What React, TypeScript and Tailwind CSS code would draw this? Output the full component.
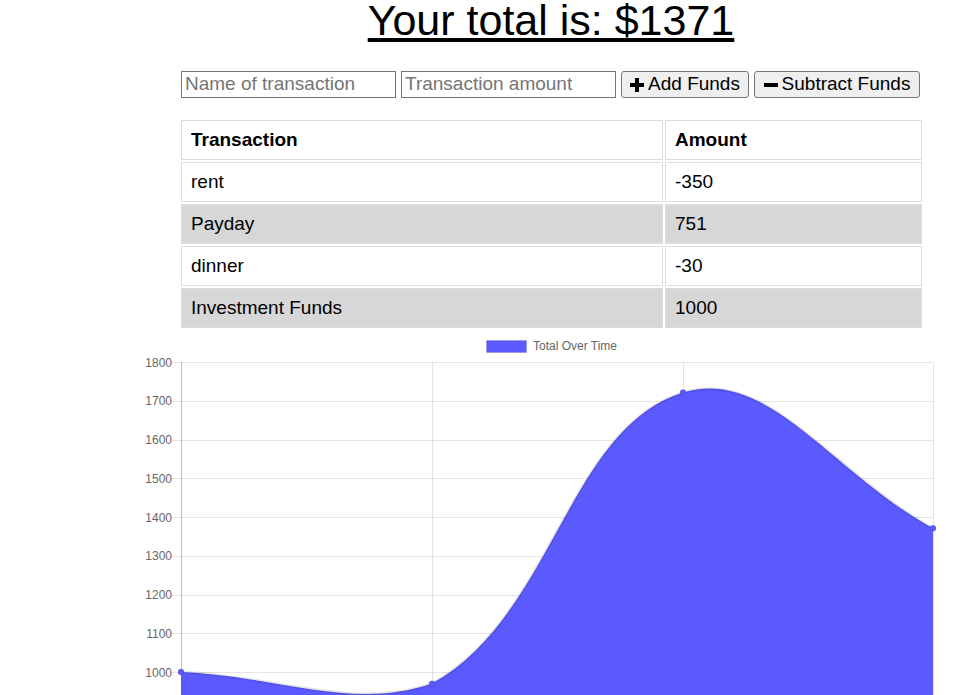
import React from 'react';

type Tx = { name: string; amount: number };

const transactions: Tx[] = [
  { name: 'rent', amount: -350 },
  { name: 'Payday', amount: 751 },
  { name: 'dinner', amount: -30 },
  { name: 'Investment Funds', amount: 1000 },
];

const PlusIcon = () => (
  <svg width="14" height="14" viewBox="0 0 14 14" className="shrink-0">
    <rect x="5" y="0" width="4" height="14" fill="#000" />
    <rect x="0" y="5" width="14" height="4" fill="#000" />
  </svg>
);

const MinusIcon = () => (
  <svg width="14" height="14" viewBox="0 0 14 14" className="shrink-0">
    <rect x="0" y="5" width="14" height="4" fill="#000" />
  </svg>
);

// chart geometry, in page coordinates
const yOf = (v: number) => 362 + (1800 - v) * 0.3875;
const ticks = [1800, 1700, 1600, 1500, 1400, 1300, 1200, 1100, 1000, 900];
const xs = [181, 432, 683, 933];
const totals = [1000, 970, 1721, 1371];

const curve =
  'M181,672 C281.4,676.6 352.6,711 432,683.6 C553.4,616 567.8,428.3 683,392.6 C768.2,366.2 833,474 933,528.2';

const Chart = () => (
  <svg width="820" height="420" viewBox="120 335 820 420" className="block ml-[120px]">
    <rect x="486.5" y="340.5" width="40" height="12" fill="#5a5aff" stroke="rgba(0,0,0,0.1)" />
    <text x="533" y="350" fontSize="12" fill="#666" fontFamily="'Liberation Sans', Arial, sans-serif">
      Total Over Time
    </text>
    {ticks.map((t) => (
      <g key={t}>
        <line x1="171" x2="933" y1={Math.round(yOf(t)) + 0.5} y2={Math.round(yOf(t)) + 0.5} stroke="rgba(0,0,0,0.1)" />
        <text
          x="172"
          y={yOf(t) + 4.5}
          fontSize="12"
          fill="#666"
          textAnchor="end"
          fontFamily="'Liberation Sans', Arial, sans-serif"
        >
          {t}
        </text>
      </g>
    ))}
    {xs.map((x) => (
      <line key={x} x1={x + 0.5} x2={x + 0.5} y1="362" y2="721" stroke={x === 181 ? 'rgba(0,0,0,0.25)' : 'rgba(0,0,0,0.1)'} />
    ))}
    <path d={`${curve} L933,711 L181,711 Z`} fill="#5a5aff" />
    <path d={curve} fill="none" stroke="rgba(0,0,0,0.1)" strokeWidth="3" />
    {xs.map((x, i) => (
      <circle key={x} cx={x} cy={yOf(totals[i])} r="3" fill="#5a5aff" stroke="rgba(0,0,0,0.1)" />
    ))}
  </svg>
);

export default function App() {
  return (
    <div className="bg-white text-black font-['Liberation_Sans',Arial,sans-serif] h-[695px] overflow-hidden">
      <div className="ml-[181px] w-[740px]">
        <h1 className="text-[43px] leading-[40px] font-normal text-center underline">Your total is: $1371</h1>
        <form className="mt-[31px] flex gap-[5px] h-[27px]" onSubmit={(e) => e.preventDefault()}>
          <input
            type="text"
            placeholder="Name of transaction"
            className="w-[215px] h-[27px] border border-[#767676] px-[3px] text-[19px] placeholder:text-[#757575]"
          />
          <input
            type="number"
            placeholder="Transaction amount"
            className="w-[215px] h-[27px] border border-[#767676] px-[3px] text-[19px] placeholder:text-[#757575]"
          />
          <button className="w-[128px] h-[27px] flex items-center justify-center gap-[4px] bg-[#efefef] border border-[#767676] rounded-[3px] text-[19px]">
            <PlusIcon />
            Add Funds
          </button>
          <button className="w-[166px] h-[27px] flex items-center justify-center gap-[4px] bg-[#efefef] border border-[#767676] rounded-[3px] text-[19px]">
            <MinusIcon />
            Subtract Funds
          </button>
        </form>
        <table className="mt-[20px] -ml-[2px] w-[745px] table-fixed border-separate border-spacing-[2px] text-[19px]">
          <thead>
            <tr>
              <th className="w-[482px] h-[40px] border border-[#ddd] px-[9px] text-left font-bold">Transaction</th>
              <th className="w-[257px] h-[40px] border border-[#ddd] px-[9px] text-left font-bold">Amount</th>
            </tr>
          </thead>
          <tbody>
            {transactions.map((tx, i) => (
              <tr key={tx.name} className={i % 2 === 1 ? 'bg-[#d7d7d7]' : ''}>
                <td className="h-[40px] border border-[#ddd] px-[9px]">{tx.name}</td>
                <td className="h-[40px] border border-[#ddd] px-[9px]">{tx.amount}</td>
              </tr>
            ))}
          </tbody>
        </table>
      </div>
      <div className="mt-[5px]">
        <Chart />
      </div>
    </div>
  );
}
